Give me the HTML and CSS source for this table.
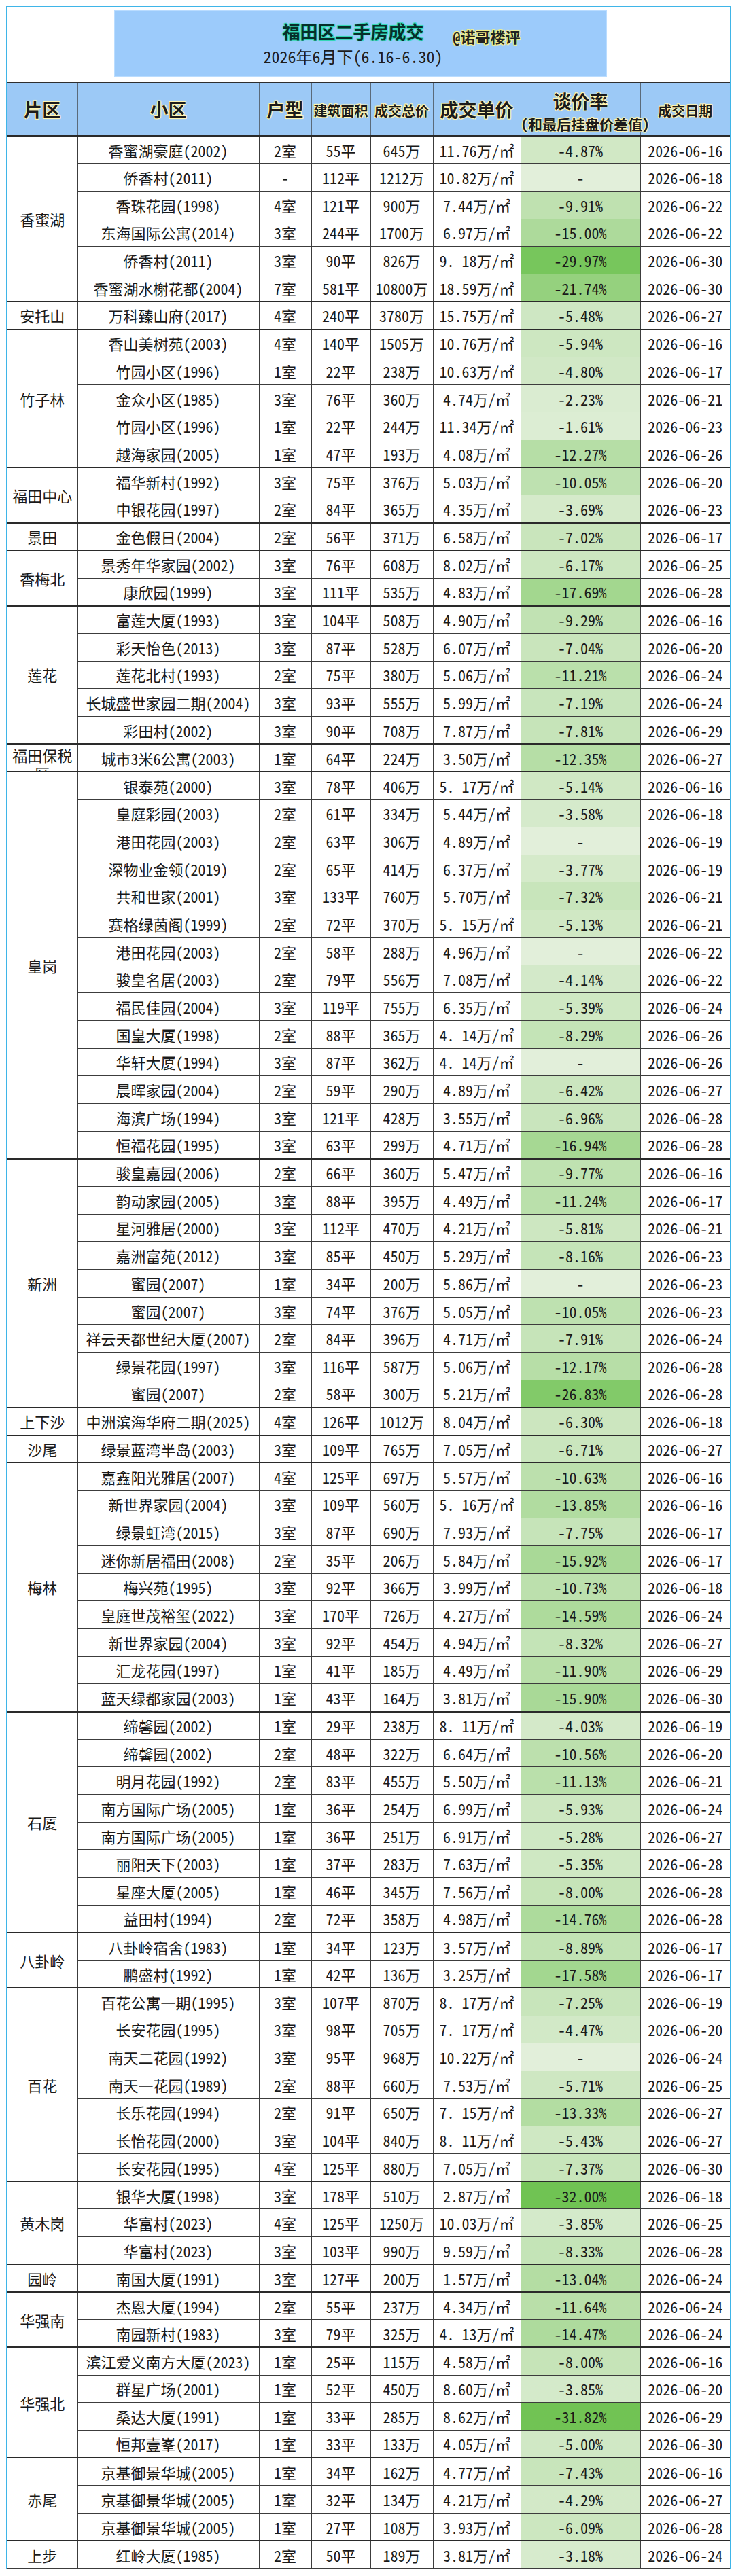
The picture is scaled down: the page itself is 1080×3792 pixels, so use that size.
FILE: index.html
```html
<!DOCTYPE html>
<html lang="zh-CN">
<head>
<meta charset="utf-8">
<title>福田区二手房成交</title>
<link rel="stylesheet" href="styles.css">
</head>
<body>
<div class="page">
<div class="sheet">
  <div class="masthead">
    <div class="title-box">
      <div class="title-row">
        <span class="title-main">福田区二手房成交</span>
        <span class="title-tag">@诺哥楼评</span>
      </div>
      <div class="title-sub">2026年6月下（6.16-6.30）</div>
    </div>
  </div>
  <table class="deals">
    <colgroup>
      <col class="c-area"><col class="c-name"><col class="c-type"><col class="c-size"><col class="c-total"><col class="c-unit"><col class="c-rate"><col class="c-date">
    </colgroup>
    <thead>
      <tr>
        <th class="h-big">片区</th>
        <th class="h-big">小区</th>
        <th class="h-big">户型</th>
        <th class="h-sm">建筑面积</th>
        <th class="h-sm">成交总价</th>
        <th class="h-big">成交单价</th>
        <th class="h-rate"><div class="h-rate-main">谈价率</div><div class="h-rate-sub">(和最后挂盘价差值)</div></th>
        <th class="h-sm h-date">成交日期</th>
      </tr>
    </thead>
    <tbody>
      <tr class="gs"><td class="area" rowspan="6">香蜜湖</td><td>香蜜湖豪庭(2002)</td><td>2室</td><td>55平</td><td>645万</td><td>11.76万/㎡</td><td class="rate" style="--v:4.87">-4.87%</td><td class="date">2026-06-16</td></tr>
      <tr><td>侨香村(2011)</td><td>-</td><td>112平</td><td>1212万</td><td>10.82万/㎡</td><td class="rate" style="--v:0">-</td><td class="date">2026-06-18</td></tr>
      <tr><td>香珠花园(1998)</td><td>4室</td><td>121平</td><td>900万</td><td>7.44万/㎡</td><td class="rate" style="--v:9.91">-9.91%</td><td class="date">2026-06-22</td></tr>
      <tr><td>东海国际公寓(2014)</td><td>3室</td><td>244平</td><td>1700万</td><td>6.97万/㎡</td><td class="rate" style="--v:15">-15.00%</td><td class="date">2026-06-22</td></tr>
      <tr><td>侨香村(2011)</td><td>3室</td><td>90平</td><td>826万</td><td>9. 18万/㎡</td><td class="rate" style="--v:29.97">-29.97%</td><td class="date">2026-06-30</td></tr>
      <tr><td>香蜜湖水榭花都(2004)</td><td>7室</td><td>581平</td><td>10800万</td><td>18.59万/㎡</td><td class="rate" style="--v:21.74">-21.74%</td><td class="date">2026-06-30</td></tr>

      <tr class="gs"><td class="area">安托山</td><td>万科臻山府(2017)</td><td>4室</td><td>240平</td><td>3780万</td><td>15.75万/㎡</td><td class="rate" style="--v:5.48">-5.48%</td><td class="date">2026-06-27</td></tr>

      <tr class="gs"><td class="area" rowspan="5">竹子林</td><td>香山美树苑(2003)</td><td>4室</td><td>140平</td><td>1505万</td><td>10.76万/㎡</td><td class="rate" style="--v:5.94">-5.94%</td><td class="date">2026-06-16</td></tr>
      <tr><td>竹园小区(1996)</td><td>1室</td><td>22平</td><td>238万</td><td>10.63万/㎡</td><td class="rate" style="--v:4.80">-4.80%</td><td class="date">2026-06-17</td></tr>
      <tr><td>金众小区(1985)</td><td>3室</td><td>76平</td><td>360万</td><td>4.74万/㎡</td><td class="rate" style="--v:2.23">-2.23%</td><td class="date">2026-06-21</td></tr>
      <tr><td>竹园小区(1996)</td><td>1室</td><td>22平</td><td>244万</td><td>11.34万/㎡</td><td class="rate" style="--v:1.61">-1.61%</td><td class="date">2026-06-23</td></tr>
      <tr><td>越海家园(2005)</td><td>1室</td><td>47平</td><td>193万</td><td>4.08万/㎡</td><td class="rate" style="--v:12.27">-12.27%</td><td class="date">2026-06-26</td></tr>

      <tr class="gs"><td class="area" rowspan="2">福田中心</td><td>福华新村(1992)</td><td>3室</td><td>75平</td><td>376万</td><td>5.03万/㎡</td><td class="rate" style="--v:10.05">-10.05%</td><td class="date">2026-06-20</td></tr>
      <tr><td>中银花园(1997)</td><td>2室</td><td>84平</td><td>365万</td><td>4.35万/㎡</td><td class="rate" style="--v:3.69">-3.69%</td><td class="date">2026-06-23</td></tr>

      <tr class="gs"><td class="area">景田</td><td>金色假日(2004)</td><td>2室</td><td>56平</td><td>371万</td><td>6.58万/㎡</td><td class="rate" style="--v:7.02">-7.02%</td><td class="date">2026-06-17</td></tr>

      <tr class="gs"><td class="area" rowspan="2">香梅北</td><td>景秀年华家园(2002)</td><td>3室</td><td>76平</td><td>608万</td><td>8.02万/㎡</td><td class="rate" style="--v:6.17">-6.17%</td><td class="date">2026-06-25</td></tr>
      <tr><td>康欣园(1999)</td><td>3室</td><td>111平</td><td>535万</td><td>4.83万/㎡</td><td class="rate" style="--v:17.69">-17.69%</td><td class="date">2026-06-28</td></tr>

      <tr class="gs"><td class="area" rowspan="5">莲花</td><td>富莲大厦(1993)</td><td>3室</td><td>104平</td><td>508万</td><td>4.90万/㎡</td><td class="rate" style="--v:9.29">-9.29%</td><td class="date">2026-06-16</td></tr>
      <tr><td>彩天怡色(2013)</td><td>3室</td><td>87平</td><td>528万</td><td>6.07万/㎡</td><td class="rate" style="--v:7.04">-7.04%</td><td class="date">2026-06-20</td></tr>
      <tr><td>莲花北村(1993)</td><td>2室</td><td>75平</td><td>380万</td><td>5.06万/㎡</td><td class="rate" style="--v:11.21">-11.21%</td><td class="date">2026-06-24</td></tr>
      <tr><td>长城盛世家园二期(2004)</td><td>3室</td><td>93平</td><td>555万</td><td>5.99万/㎡</td><td class="rate" style="--v:7.19">-7.19%</td><td class="date">2026-06-24</td></tr>
      <tr><td>彩田村(2002)</td><td>3室</td><td>90平</td><td>708万</td><td>7.87万/㎡</td><td class="rate" style="--v:7.81">-7.81%</td><td class="date">2026-06-29</td></tr>

      <tr class="gs"><td class="area"><div class="area-clip">福田保税区</div></td><td>城市3米6公寓(2003)</td><td>1室</td><td>64平</td><td>224万</td><td>3.50万/㎡</td><td class="rate" style="--v:12.35">-12.35%</td><td class="date">2026-06-27</td></tr>

      <tr class="gs"><td class="area" rowspan="14">皇岗</td><td>银泰苑(2000)</td><td>3室</td><td>78平</td><td>406万</td><td>5. 17万/㎡</td><td class="rate" style="--v:5.14">-5.14%</td><td class="date">2026-06-16</td></tr>
      <tr><td>皇庭彩园(2003)</td><td>2室</td><td>61平</td><td>334万</td><td>5.44万/㎡</td><td class="rate" style="--v:3.58">-3.58%</td><td class="date">2026-06-18</td></tr>
      <tr><td>港田花园(2003)</td><td>2室</td><td>63平</td><td>306万</td><td>4.89万/㎡</td><td class="rate" style="--v:0">-</td><td class="date">2026-06-19</td></tr>
      <tr><td>深物业金领(2019)</td><td>2室</td><td>65平</td><td>414万</td><td>6.37万/㎡</td><td class="rate" style="--v:3.77">-3.77%</td><td class="date">2026-06-19</td></tr>
      <tr><td>共和世家(2001)</td><td>3室</td><td>133平</td><td>760万</td><td>5.70万/㎡</td><td class="rate" style="--v:7.32">-7.32%</td><td class="date">2026-06-21</td></tr>
      <tr><td>赛格绿茵阁(1999)</td><td>2室</td><td>72平</td><td>370万</td><td>5. 15万/㎡</td><td class="rate" style="--v:5.13">-5.13%</td><td class="date">2026-06-21</td></tr>
      <tr><td>港田花园(2003)</td><td>2室</td><td>58平</td><td>288万</td><td>4.96万/㎡</td><td class="rate" style="--v:0">-</td><td class="date">2026-06-22</td></tr>
      <tr><td>骏皇名居(2003)</td><td>2室</td><td>79平</td><td>556万</td><td>7.08万/㎡</td><td class="rate" style="--v:4.14">-4.14%</td><td class="date">2026-06-22</td></tr>
      <tr><td>福民佳园(2004)</td><td>3室</td><td>119平</td><td>755万</td><td>6.35万/㎡</td><td class="rate" style="--v:5.39">-5.39%</td><td class="date">2026-06-24</td></tr>
      <tr><td>国皇大厦(1998)</td><td>2室</td><td>88平</td><td>365万</td><td>4. 14万/㎡</td><td class="rate" style="--v:8.29">-8.29%</td><td class="date">2026-06-26</td></tr>
      <tr><td>华轩大厦(1994)</td><td>3室</td><td>87平</td><td>362万</td><td>4. 14万/㎡</td><td class="rate" style="--v:0">-</td><td class="date">2026-06-26</td></tr>
      <tr><td>晨晖家园(2004)</td><td>2室</td><td>59平</td><td>290万</td><td>4.89万/㎡</td><td class="rate" style="--v:6.42">-6.42%</td><td class="date">2026-06-27</td></tr>
      <tr><td>海滨广场(1994)</td><td>3室</td><td>121平</td><td>428万</td><td>3.55万/㎡</td><td class="rate" style="--v:6.96">-6.96%</td><td class="date">2026-06-28</td></tr>
      <tr><td>恒福花园(1995)</td><td>3室</td><td>63平</td><td>299万</td><td>4.71万/㎡</td><td class="rate" style="--v:16.94">-16.94%</td><td class="date">2026-06-28</td></tr>

      <tr class="gs"><td class="area" rowspan="9">新洲</td><td>骏皇嘉园(2006)</td><td>2室</td><td>66平</td><td>360万</td><td>5.47万/㎡</td><td class="rate" style="--v:9.77">-9.77%</td><td class="date">2026-06-16</td></tr>
      <tr><td>韵动家园(2005)</td><td>3室</td><td>88平</td><td>395万</td><td>4.49万/㎡</td><td class="rate" style="--v:11.24">-11.24%</td><td class="date">2026-06-17</td></tr>
      <tr><td>星河雅居(2000)</td><td>3室</td><td>112平</td><td>470万</td><td>4.21万/㎡</td><td class="rate" style="--v:5.81">-5.81%</td><td class="date">2026-06-21</td></tr>
      <tr><td>嘉洲富苑(2012)</td><td>3室</td><td>85平</td><td>450万</td><td>5.29万/㎡</td><td class="rate" style="--v:8.16">-8.16%</td><td class="date">2026-06-23</td></tr>
      <tr><td>蜜园(2007)</td><td>1室</td><td>34平</td><td>200万</td><td>5.86万/㎡</td><td class="rate" style="--v:0">-</td><td class="date">2026-06-23</td></tr>
      <tr><td>蜜园(2007)</td><td>3室</td><td>74平</td><td>376万</td><td>5.05万/㎡</td><td class="rate" style="--v:10.05">-10.05%</td><td class="date">2026-06-23</td></tr>
      <tr><td>祥云天都世纪大厦(2007)</td><td>2室</td><td>84平</td><td>396万</td><td>4.71万/㎡</td><td class="rate" style="--v:7.91">-7.91%</td><td class="date">2026-06-24</td></tr>
      <tr><td>绿景花园(1997)</td><td>3室</td><td>116平</td><td>587万</td><td>5.06万/㎡</td><td class="rate" style="--v:12.17">-12.17%</td><td class="date">2026-06-28</td></tr>
      <tr><td>蜜园(2007)</td><td>2室</td><td>58平</td><td>300万</td><td>5.21万/㎡</td><td class="rate" style="--v:26.83">-26.83%</td><td class="date">2026-06-28</td></tr>

      <tr class="gs"><td class="area">上下沙</td><td>中洲滨海华府二期(2025)</td><td>4室</td><td>126平</td><td>1012万</td><td>8.04万/㎡</td><td class="rate" style="--v:6.30">-6.30%</td><td class="date">2026-06-18</td></tr>

      <tr class="gs"><td class="area">沙尾</td><td>绿景蓝湾半岛(2003)</td><td>3室</td><td>109平</td><td>765万</td><td>7.05万/㎡</td><td class="rate" style="--v:6.71">-6.71%</td><td class="date">2026-06-27</td></tr>

      <tr class="gs"><td class="area" rowspan="9">梅林</td><td>嘉鑫阳光雅居(2007)</td><td>4室</td><td>125平</td><td>697万</td><td>5.57万/㎡</td><td class="rate" style="--v:10.63">-10.63%</td><td class="date">2026-06-16</td></tr>
      <tr><td>新世界家园(2004)</td><td>3室</td><td>109平</td><td>560万</td><td>5. 16万/㎡</td><td class="rate" style="--v:13.85">-13.85%</td><td class="date">2026-06-16</td></tr>
      <tr><td>绿景虹湾(2015)</td><td>3室</td><td>87平</td><td>690万</td><td>7.93万/㎡</td><td class="rate" style="--v:7.75">-7.75%</td><td class="date">2026-06-17</td></tr>
      <tr><td>迷你新居福田(2008)</td><td>2室</td><td>35平</td><td>206万</td><td>5.84万/㎡</td><td class="rate" style="--v:15.92">-15.92%</td><td class="date">2026-06-17</td></tr>
      <tr><td>梅兴苑(1995)</td><td>3室</td><td>92平</td><td>366万</td><td>3.99万/㎡</td><td class="rate" style="--v:10.73">-10.73%</td><td class="date">2026-06-18</td></tr>
      <tr><td>皇庭世茂裕玺(2022)</td><td>3室</td><td>170平</td><td>726万</td><td>4.27万/㎡</td><td class="rate" style="--v:14.59">-14.59%</td><td class="date">2026-06-24</td></tr>
      <tr><td>新世界家园(2004)</td><td>3室</td><td>92平</td><td>454万</td><td>4.94万/㎡</td><td class="rate" style="--v:8.32">-8.32%</td><td class="date">2026-06-27</td></tr>
      <tr><td>汇龙花园(1997)</td><td>1室</td><td>41平</td><td>185万</td><td>4.49万/㎡</td><td class="rate" style="--v:11.90">-11.90%</td><td class="date">2026-06-29</td></tr>
      <tr><td>蓝天绿都家园(2003)</td><td>1室</td><td>43平</td><td>164万</td><td>3.81万/㎡</td><td class="rate" style="--v:15.90">-15.90%</td><td class="date">2026-06-30</td></tr>

      <tr class="gs"><td class="area" rowspan="8">石厦</td><td>缔馨园(2002)</td><td>1室</td><td>29平</td><td>238万</td><td>8. 11万/㎡</td><td class="rate" style="--v:4.03">-4.03%</td><td class="date">2026-06-19</td></tr>
      <tr><td>缔馨园(2002)</td><td>2室</td><td>48平</td><td>322万</td><td>6.64万/㎡</td><td class="rate" style="--v:10.56">-10.56%</td><td class="date">2026-06-20</td></tr>
      <tr><td>明月花园(1992)</td><td>2室</td><td>83平</td><td>455万</td><td>5.50万/㎡</td><td class="rate" style="--v:11.13">-11.13%</td><td class="date">2026-06-21</td></tr>
      <tr><td>南方国际广场(2005)</td><td>1室</td><td>36平</td><td>254万</td><td>6.99万/㎡</td><td class="rate" style="--v:5.93">-5.93%</td><td class="date">2026-06-24</td></tr>
      <tr><td>南方国际广场(2005)</td><td>1室</td><td>36平</td><td>251万</td><td>6.91万/㎡</td><td class="rate" style="--v:5.28">-5.28%</td><td class="date">2026-06-27</td></tr>
      <tr><td>丽阳天下(2003)</td><td>1室</td><td>37平</td><td>283万</td><td>7.63万/㎡</td><td class="rate" style="--v:5.35">-5.35%</td><td class="date">2026-06-28</td></tr>
      <tr><td>星座大厦(2005)</td><td>1室</td><td>46平</td><td>345万</td><td>7.56万/㎡</td><td class="rate" style="--v:8">-8.00%</td><td class="date">2026-06-28</td></tr>
      <tr><td>益田村(1994)</td><td>2室</td><td>72平</td><td>358万</td><td>4.98万/㎡</td><td class="rate" style="--v:14.76">-14.76%</td><td class="date">2026-06-28</td></tr>

      <tr class="gs"><td class="area" rowspan="2">八卦岭</td><td>八卦岭宿舍(1983)</td><td>1室</td><td>34平</td><td>123万</td><td>3.57万/㎡</td><td class="rate" style="--v:8.89">-8.89%</td><td class="date">2026-06-17</td></tr>
      <tr><td>鹏盛村(1992)</td><td>1室</td><td>42平</td><td>136万</td><td>3.25万/㎡</td><td class="rate" style="--v:17.58">-17.58%</td><td class="date">2026-06-17</td></tr>

      <tr class="gs"><td class="area" rowspan="7">百花</td><td>百花公寓一期(1995)</td><td>3室</td><td>107平</td><td>870万</td><td>8. 17万/㎡</td><td class="rate" style="--v:7.25">-7.25%</td><td class="date">2026-06-19</td></tr>
      <tr><td>长安花园(1995)</td><td>3室</td><td>98平</td><td>705万</td><td>7. 17万/㎡</td><td class="rate" style="--v:4.47">-4.47%</td><td class="date">2026-06-20</td></tr>
      <tr><td>南天二花园(1992)</td><td>3室</td><td>95平</td><td>968万</td><td>10.22万/㎡</td><td class="rate" style="--v:0">-</td><td class="date">2026-06-24</td></tr>
      <tr><td>南天一花园(1989)</td><td>2室</td><td>88平</td><td>660万</td><td>7.53万/㎡</td><td class="rate" style="--v:5.71">-5.71%</td><td class="date">2026-06-25</td></tr>
      <tr><td>长乐花园(1994)</td><td>2室</td><td>91平</td><td>650万</td><td>7. 15万/㎡</td><td class="rate" style="--v:13.33">-13.33%</td><td class="date">2026-06-27</td></tr>
      <tr><td>长怡花园(2000)</td><td>3室</td><td>104平</td><td>840万</td><td>8. 11万/㎡</td><td class="rate" style="--v:5.43">-5.43%</td><td class="date">2026-06-27</td></tr>
      <tr><td>长安花园(1995)</td><td>4室</td><td>125平</td><td>880万</td><td>7.05万/㎡</td><td class="rate" style="--v:7.37">-7.37%</td><td class="date">2026-06-30</td></tr>

      <tr class="gs"><td class="area" rowspan="3">黄木岗</td><td>银华大厦(1998)</td><td>3室</td><td>178平</td><td>510万</td><td>2.87万/㎡</td><td class="rate" style="--v:32">-32.00%</td><td class="date">2026-06-18</td></tr>
      <tr><td>华富村(2023)</td><td>4室</td><td>125平</td><td>1250万</td><td>10.03万/㎡</td><td class="rate" style="--v:3.85">-3.85%</td><td class="date">2026-06-25</td></tr>
      <tr><td>华富村(2023)</td><td>3室</td><td>103平</td><td>990万</td><td>9.59万/㎡</td><td class="rate" style="--v:8.33">-8.33%</td><td class="date">2026-06-28</td></tr>

      <tr class="gs"><td class="area">园岭</td><td>南国大厦(1991)</td><td>3室</td><td>127平</td><td>200万</td><td>1.57万/㎡</td><td class="rate" style="--v:13.04">-13.04%</td><td class="date">2026-06-24</td></tr>

      <tr class="gs"><td class="area" rowspan="2">华强南</td><td>杰恩大厦(1994)</td><td>2室</td><td>55平</td><td>237万</td><td>4.34万/㎡</td><td class="rate" style="--v:11.64">-11.64%</td><td class="date">2026-06-24</td></tr>
      <tr><td>南园新村(1983)</td><td>3室</td><td>79平</td><td>325万</td><td>4. 13万/㎡</td><td class="rate" style="--v:14.47">-14.47%</td><td class="date">2026-06-24</td></tr>

      <tr class="gs"><td class="area" rowspan="4">华强北</td><td>滨江爱义南方大厦(2023)</td><td>1室</td><td>25平</td><td>115万</td><td>4.58万/㎡</td><td class="rate" style="--v:8">-8.00%</td><td class="date">2026-06-16</td></tr>
      <tr><td>群星广场(2001)</td><td>1室</td><td>52平</td><td>450万</td><td>8.60万/㎡</td><td class="rate" style="--v:3.85">-3.85%</td><td class="date">2026-06-20</td></tr>
      <tr><td>桑达大厦(1991)</td><td>1室</td><td>33平</td><td>285万</td><td>8.62万/㎡</td><td class="rate" style="--v:31.82">-31.82%</td><td class="date">2026-06-29</td></tr>
      <tr><td>恒邦壹峯(2017)</td><td>1室</td><td>33平</td><td>133万</td><td>4.05万/㎡</td><td class="rate" style="--v:5">-5.00%</td><td class="date">2026-06-30</td></tr>

      <tr class="gs"><td class="area" rowspan="3">赤尾</td><td>京基御景华城(2005)</td><td>1室</td><td>34平</td><td>162万</td><td>4.77万/㎡</td><td class="rate" style="--v:7.43">-7.43%</td><td class="date">2026-06-16</td></tr>
      <tr><td>京基御景华城(2005)</td><td>1室</td><td>32平</td><td>134万</td><td>4.21万/㎡</td><td class="rate" style="--v:4.29">-4.29%</td><td class="date">2026-06-27</td></tr>
      <tr><td>京基御景华城(2005)</td><td>1室</td><td>27平</td><td>108万</td><td>3.93万/㎡</td><td class="rate" style="--v:6.09">-6.09%</td><td class="date">2026-06-28</td></tr>

      <tr class="gs"><td class="area">上步</td><td>红岭大厦(1985)</td><td>2室</td><td>50平</td><td>189万</td><td>3.81万/㎡</td><td class="rate" style="--v:3.18">-3.18%</td><td class="date">2026-06-24</td></tr>
    </tbody>
  </table>
</div>
</div>
</body>
</html>
```

FILE: styles.css
```css
* {
  box-sizing: border-box;
}

html, body {
  margin: 0;
  padding: 0;
  background: #ffffff;
}

body {
  font-family: "Noto Sans CJK SC", "Noto Sans", sans-serif;
  font-feature-settings: "hwid" 1;
  color: #1a1a1a;
}

.page {
  width: 1080px;
  height: 3792px;
  overflow: hidden;
  padding: 9px 4px 0 9px;
}

.sheet {
  width: 1067px;
  border: 2px solid #3fb5e8;
  border-bottom: 0;
}

/* ---------- masthead ---------- */
.masthead {
  height: 111px;
  padding-top: 4px;
  border-bottom: 2px solid #2e2e2e;
}

.title-box {
  margin-left: 157px;
  width: 725px;
  height: 98px;
  background: #9ccbfb;
  border: 1px solid #b9dcff;
  padding: 15px 22px 0 0;
}

.title-row {
  display: grid;
  grid-template-columns: 1fr auto 1fr;
  grid-template-rows: 30px;
}

.title-main {
  grid-column: 2;
  align-self: start;
  font-size: 26px;
  line-height: 30px;
  font-weight: 700;
  color: #062f2a;
  text-shadow:
    1px 1px 0 #35d6b6,
    -1px -1px 0 #35d6b6,
    1px -1px 0 #35d6b6,
    -1px 1px 0 #35d6b6,
    0 0 3px #4fe8c6;
}

.title-tag {
  grid-column: 3;
  justify-self: start;
  align-self: end;
  margin-left: 43px;
  font-size: 22px;
  line-height: 16px;
  font-weight: 700;
  color: #222;
  text-shadow:
    1px 1px 0 #f4f08a,
    -1px -1px 0 #f4f08a,
    1px -1px 0 #f4f08a,
    -1px 1px 0 #f4f08a,
    0 0 3px #f4f08a;
}

.title-sub {
  margin-top: 8px;
  text-align: center;
  font-size: 24px;
  line-height: 28px;
  color: #1c1c1c;
}

/* ---------- table ---------- */
.deals {
  width: 1063px;
  table-layout: fixed;
  border-collapse: collapse;
  border: none;
}

.c-area { width: 103px; }
.c-name { width: 267px; }
.c-type { width: 77px; }
.c-size { width: 87px; }
.c-total { width: 92px; }
.c-unit { width: 129px; }
.c-rate { width: 176px; }
.c-date { width: 132px; }

.deals th {
  height: 78px;
  padding: 0;
  background: #9cc9f6;
  border-left: 1px solid #5a6a7a;
  border-right: 1px solid #5a6a7a;
  border-bottom: 2px solid #2a2a2a;
  font-weight: 700;
  color: #1b1b1b;
  text-align: center;
  vertical-align: middle;
  white-space: nowrap;
  text-shadow:
    1px 1px 0 #fff4b0,
    -1px -1px 0 #fff4b0,
    1px -1px 0 #fff4b0,
    -1px 1px 0 #fff4b0,
    0 0 3px #fff4b0;
}

.deals th:first-child {
  border-left: none;
}

.deals th.h-date {
  border-right: none;
}

.h-big {
  font-size: 27px;
  line-height: 34px;
}

.h-sm {
  font-size: 20px;
  line-height: 26px;
  padding-top: 5px !important;
}

.h-rate {
  padding-top: 4px !important;
}

.h-rate-main {
  font-size: 27px;
  line-height: 36px;
}

.h-rate-sub {
  font-size: 21px;
  line-height: 26px;
  margin-top: 2px;
}

.deals tbody tr {
  height: 40.7px;
}

.deals td {
  padding: 0;
  font-size: 22px;
  line-height: 24px;
  text-align: center;
  vertical-align: middle;
  white-space: nowrap;
  border: 1px solid #3c3c3c;
  background: #ffffff;
}

.deals tr.gs td {
  border-top: 2px solid #2a2a2a;
}

.deals td.area {
  border-left: none;
  font-size: 22px;
}

.deals td.date {
  border-right: none;
}

.area-clip {
  height: 39px;
  overflow: hidden;
  white-space: normal;
  line-height: 26px;
  padding-top: 2px;
}

.deals td.rate {
  background: rgb(
    calc(226 - 3.56 * var(--v)),
    calc(239 - 1.375 * var(--v)),
    calc(218 - 4.22 * var(--v))
  );
}
```
